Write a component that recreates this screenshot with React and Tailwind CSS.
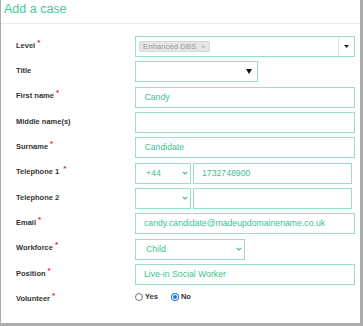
import React from "react";

const font = { fontFamily: '"Liberation Sans", Arial, sans-serif' };

const Label = ({ text, required, extraGap }) => (
  <div className="w-[119px] shrink-0 pt-[5.8px] text-[7.5px] leading-none font-bold text-[#333]">
    {text}
    {required && (
      <span className={`relative top-[-3px] text-[8px] text-[#f02020] ${extraGap ? "ml-[4px]" : "ml-[2px]"}`}>*</span>
    )}
  </div>
);

const Box = ({ children, className = "" }) => (
  <div className={`h-[21px] border border-[#99dec7] bg-white flex items-center text-[8.7px] text-[#3dbf8f] ${className}`}>
    {children}
  </div>
);

const Chevron = () => (
  <svg width="6" height="4" viewBox="0 0 6 4" className="ml-auto mr-[2px]">
    <path d="M0.8 0.8 L3 3 L5.2 0.8" fill="none" stroke="#3dbf8f" strokeWidth="1.2" />
  </svg>
);

const Row = ({ label, required, extraGap, children }) => (
  <div className="flex h-[21px]">
    <Label text={label} required={required} extraGap={extraGap} />
    <div className="flex-1 flex gap-[2px]">{children}</div>
  </div>
);

const Radio = ({ checked }) =>
  checked ? (
    <span className="w-[8px] h-[8px] rounded-full bg-[#1a73e8] flex items-center justify-center">
      <span className="w-[6px] h-[6px] rounded-full bg-white flex items-center justify-center">
        <span className="w-[4px] h-[4px] rounded-full bg-[#1a73e8]" />
      </span>
    </span>
  ) : (
    <span className="w-[8px] h-[8px] rounded-full border border-[#777] bg-white" />
  );

export default function App() {
  return (
    <div style={font} className="w-[363px] h-[326px] bg-white border-l border-r-[3px] border-b-[3px] border-[#ababab] flex flex-col">
      <div className="h-[24px] border-b border-[#ececec] pl-[3px] pt-[3px] text-[12.5px] leading-none text-[#3ecb9a]">
        Add a case
      </div>
      <div className="pl-[15px] pr-[5px] pt-[12px] flex flex-col gap-[4.33px]">
        <Row label="Level" required>
          <Box className="flex-1">
            <div className="ml-[3px] h-[11px] px-[3px] flex items-center gap-[5px] bg-[#e6e6e6] border border-[#d6d6d6] rounded-[2px] text-[7.8px] text-[#999]">
              <span>Enhanced DBS</span>
              <span className="text-[8px] leading-none text-[#b0b0b0]">×</span>
            </div>
            <div className="ml-auto w-[16px] h-full border-l border-[#e2e2e2] flex items-center justify-center">
              <svg width="5" height="3" viewBox="0 0 5 3">
                <path d="M0 0 L5 0 L2.5 3 Z" fill="#222" />
              </svg>
            </div>
          </Box>
        </Row>
        <Row label="Title">
          <Box className="w-[123px] justify-end pr-[5px]">
            <svg width="6" height="5" viewBox="0 0 6 5">
              <path d="M0 0 L6 0 L3 5 Z" fill="#111" />
            </svg>
          </Box>
        </Row>
        <Row label="First name" required>
          <Box className="flex-1 pl-[8.5px]">Candy</Box>
        </Row>
        <Row label="Middle name(s)">
          <Box className="flex-1" />
        </Row>
        <Row label="Surname" required>
          <Box className="flex-1 pl-[8.5px]">Candidate</Box>
        </Row>
        <Row label="Telephone 1" required extraGap>
          <Box className="w-[56px] pl-[10px]">
            +44
            <Chevron />
          </Box>
          <Box className="w-[159px] pl-[8px]">1732748900</Box>
        </Row>
        <Row label="Telephone 2">
          <Box className="w-[56px]">
            <Chevron />
          </Box>
          <Box className="w-[159px]" />
        </Row>
        <Row label="Email" required>
          <Box className="flex-1 pl-[8px]">candy.candidate@madeupdomainename.co.uk</Box>
        </Row>
        <Row label="Workforce" required>
          <Box className="w-[110px] pl-[10px]">
            Child
            <Chevron />
          </Box>
        </Row>
        <Row label="Position" required>
          <Box className="flex-1 pl-[8px]">Live-in Social Worker</Box>
        </Row>
        <Row label="Volunteer" required>
          <div className="flex items-center h-[15px] text-[7.5px] font-bold text-[#333]">
            <Radio />
            <span className="ml-[2px]">Yes</span>
            <span className="ml-[13px]"><Radio checked /></span>
            <span className="ml-[2px]">No</span>
          </div>
        </Row>
      </div>
    </div>
  );
}
